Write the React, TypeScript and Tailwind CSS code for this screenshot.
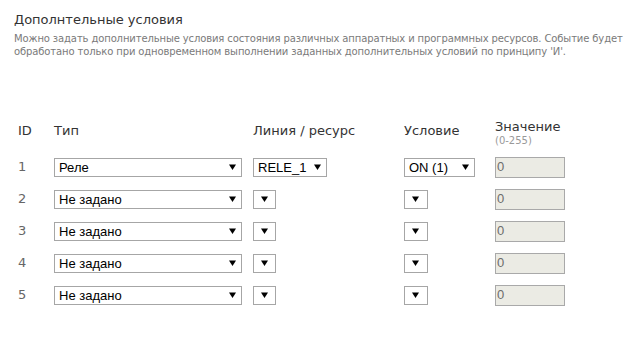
import React from "react";

const rows = [
  { id: 1, type: "Реле", line: "RELE_1", cond: "ON (1)" },
  { id: 2, type: "Не задано", line: "", cond: "" },
  { id: 3, type: "Не задано", line: "", cond: "" },
  { id: 4, type: "Не задано", line: "", cond: "" },
  { id: 5, type: "Не задано", line: "", cond: "" },
];

function Arrow() {
  return (
    <svg width="7" height="6" viewBox="0 0 7 6" className="shrink-0">
      <path d="M0 0.5h7L3.5 6z" fill="#000" />
    </svg>
  );
}

function Select({ value, width }: { value: string; width: string }) {
  return (
    <div
      className={`${width} h-[19px] flex items-center border border-[#a6a6a6] bg-white pl-[4px] pr-[5px] text-[13px] text-black ${
        value ? "justify-between" : "justify-center"
      }`}
      style={{ fontFamily: '"Liberation Sans", Arial, sans-serif' }}
    >
      {value && <span className="leading-none">{value}</span>}
      <Arrow />
    </div>
  );
}

export default function App() {
  return (
    <div
      className="w-[637px] h-[344px] bg-white pl-[14px] pt-[10px] text-[#333]"
      style={{ fontFamily: '"DejaVu Sans", Verdana, sans-serif' }}
    >
      <h2 className="text-[13px] leading-[19px] font-normal text-[#333]">Дополнтельные условия</h2>
      <p className="mt-[3px] text-[10px] leading-[13px] tracking-[-0.12px] text-[#7a7a7a] whitespace-nowrap">
        Можно задать дополнительные условия состояния различных аппаратных и программных ресурсов. Событие будет
        <br />
        обработано только при одновременном выполнении заданных дополнительных условий по принципу 'И'.
      </p>

      <div className="mt-[57px] pl-[4px] text-[13px]">
        <div className="grid grid-cols-[36px_199px_151px_91px_80px] h-[32px] items-center">
          <span>ID</span>
          <span>Тип</span>
          <span>Линия / ресурс</span>
          <span>Условие</span>
          <div className="flex flex-col mt-[3px]">
            <span className="leading-[15px]">Значение</span>
            <span className="text-[10px] leading-[13px] text-[#999]">(0-255)</span>
          </div>
        </div>
        <div className="mt-[4px]">
          {rows.map((r) => (
            <div key={r.id} className="grid grid-cols-[36px_199px_151px_91px_80px] h-[32px] items-center">
              <span className="text-[#666]">{r.id}</span>
              <Select value={r.type} width="w-[188px]" />
              <Select value={r.line} width={r.line ? "w-[74px]" : "w-[23px]"} />
              <Select value={r.cond} width={r.cond ? "w-[71px]" : "w-[24px]"} />
              <div
                className="w-[70px] h-[21px] flex items-center border border-[#a9a9a9] bg-[#ebebe4] pl-[1px] text-[13px] text-[#6d6d6d]"
                style={{ fontFamily: '"Liberation Sans", Arial, sans-serif' }}
              >
                0
              </div>
            </div>
          ))}
        </div>
      </div>
    </div>
  );
}
